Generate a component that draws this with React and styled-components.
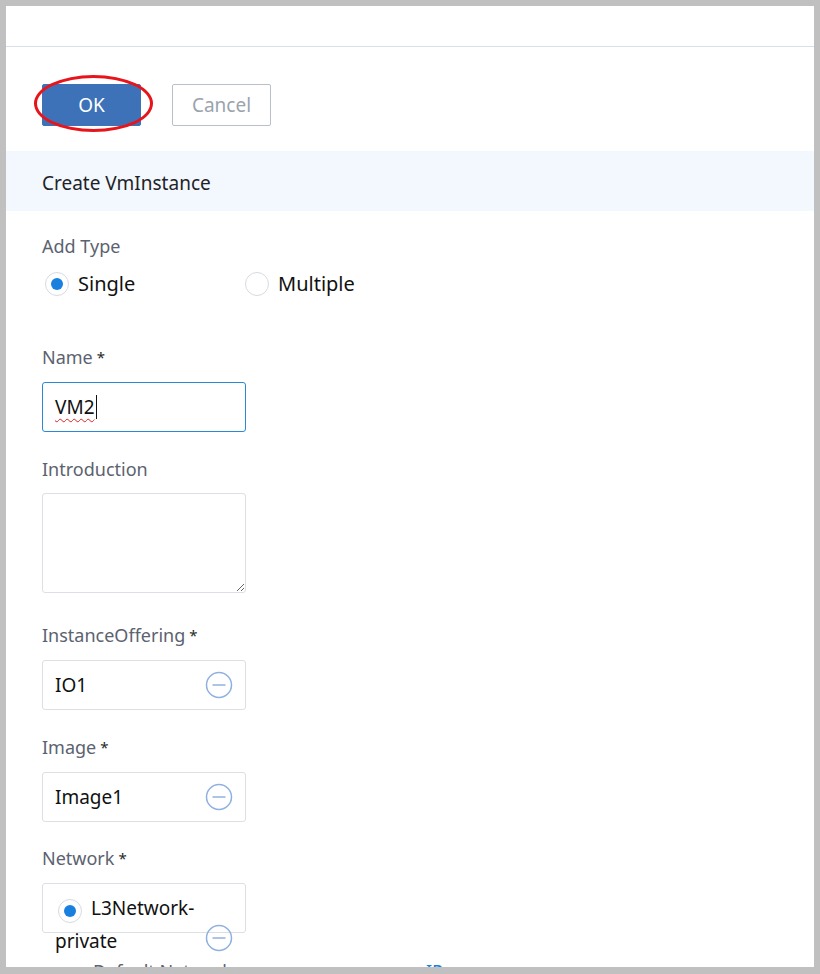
import React from 'react'
import styled, { createGlobalStyle } from 'styled-components'

const GlobalStyle = createGlobalStyle`
  html, body {
    margin: 0;
    padding: 0;
    background: #c0c0c0;
  }
  body {
    font-family: 'Noto Sans', 'Open Sans', sans-serif;
  }
`

const Panel = styled.div`
  margin: 6px 6px 0 6px;
  height: 961px;
  background: #fff;
  overflow: hidden;
`

const TopBar = styled.div`
  height: 40px;
  border-bottom: 1px solid #d9dfe6;
`

const Toolbar = styled.div`
  display: flex;
  gap: 31px;
  padding: 37px 36px 0 36px;
`

const ButtonWrap = styled.div`
  position: relative;
`

const Button = styled.button`
  width: 99px;
  height: 42px;
  box-sizing: border-box;
  font-family: inherit;
  font-size: 19px;
  border-radius: 2px;
  cursor: pointer;
  border: 1px solid ${p => (p.$primary ? '#3d72b8' : '#b9c0c9')};
  background: ${p => (p.$primary ? '#3d72b8' : '#fff')};
  color: ${p => (p.$primary ? '#fff' : '#9aa3ae')};
`

const Highlight = styled.div`
  position: absolute;
  left: -8px;
  top: -9px;
  width: 119px;
  height: 57px;
  box-sizing: border-box;
  border: 3.5px solid #e8141b;
  border-radius: 50%;
  pointer-events: none;
`

const SectionHeader = styled.div`
  margin-top: 25px;
  height: 60px;
  box-sizing: border-box;
  padding: 3px 36px 0 36px;
  display: flex;
  align-items: center;
  background: #f2f8fd;
  font-size: 19px;
  color: #1f2329;
`

const Form = styled.div`
  padding: 23px 36px 0 36px;
`

const Field = styled.div`
  margin-bottom: ${p => p.$gap || 24}px;
`

const Label = styled.div`
  font-size: 18px;
  line-height: 24px;
  color: #5b6270;
  margin-bottom: 13px;
`

const Star = styled.span`
  margin-left: 4px;
  font-size: 15px;
  color: #1f2a1f;
  vertical-align: top;
`

const RadioRow = styled.div`
  display: flex;
  align-items: center;
  margin-top: -1px;
`

const RadioOption = styled.label`
  display: flex;
  align-items: center;
  width: ${p => p.$width || 'auto'};
  font-size: 20px;
  color: #111;
`

const RadioCircle = styled.span`
  width: 24px;
  height: 24px;
  box-sizing: border-box;
  border-radius: 50%;
  border: 1px solid #d6dbe1;
  margin: 0 9px 0 3px;
  display: flex;
  align-items: center;
  justify-content: center;
  flex-shrink: 0;
  &::after {
    content: '';
    width: 12px;
    height: 12px;
    border-radius: 50%;
    background: #1a80e0;
    display: ${p => (p.$checked ? 'block' : 'none')};
  }
`

const TextBox = styled.div`
  width: 204px;
  height: 50px;
  box-sizing: border-box;
  border: 1px solid ${p => (p.$focused ? '#2a88d8' : '#dcdfe3')};
  border-radius: 3px;
  padding: 0 12px;
  display: flex;
  align-items: center;
  font-size: 19px;
  color: #111;
`

const Misspelled = styled.span`
  text-decoration: underline wavy #e02020;
  text-decoration-thickness: 1px;
  text-underline-offset: 4px;
`

const Caret = styled.span`
  display: inline-block;
  width: 1px;
  height: 24px;
  background: #111;
  margin-left: 1px;
`

const TextArea = styled.textarea`
  width: 204px;
  height: 100px;
  box-sizing: border-box;
  border: 1px solid #dcdfe3;
  border-radius: 3px;
  font-family: inherit;
  font-size: 18px;
  outline: none;
  margin: -1px 0 0 0;
  vertical-align: top;
`

const SelectBox = styled.div`
  width: 204px;
  height: 50px;
  box-sizing: border-box;
  border: 1px solid #dcdfe3;
  border-radius: 3px;
  padding: 0 12px;
  display: flex;
  align-items: center;
  justify-content: space-between;
  font-size: 19px;
  color: #111;
`

const NetworkBox = styled(SelectBox)`
  align-items: flex-start;
  padding-top: 8px;
`

const NetworkItem = styled.div`
  width: 145px;
  font-size: 19px;
  line-height: 33px;
  color: #111;
`

const InlineRadio = styled(RadioCircle)`
  display: inline-flex;
  vertical-align: -2px;
  margin: 0 9px 0 3px;
`

const NetworkIcon = styled.span`
  margin-top: 32px;
  display: flex;
`

const MoreRow = styled.div`
  display: flex;
  margin-top: 26px;
  font-size: 18px;
  color: #5b6270;
`

const MoreCell = styled.span`
  width: ${p => p.$width}px;
  color: ${p => p.$color || 'inherit'};
`

function MinusCircle() {
  return (
    <svg width="28" height="28" viewBox="0 0 28 28" fill="none">
      <circle cx="14" cy="14" r="12.5" stroke="#8fb1e0" strokeWidth="1.5" />
      <line x1="7.5" y1="14" x2="20.5" y2="14" stroke="#8fb1e0" strokeWidth="1.5" />
    </svg>
  )
}

export default function App() {
  return (
    <>
      <GlobalStyle />
      <Panel>
        <TopBar />
        <Toolbar>
          <ButtonWrap>
            <Button $primary>OK</Button>
            <Highlight />
          </ButtonWrap>
          <Button>Cancel</Button>
        </Toolbar>
        <SectionHeader>Create VmInstance</SectionHeader>
        <Form>
          <Field $gap={48}>
            <Label>Add Type</Label>
            <RadioRow>
              <RadioOption $width="200px">
                <RadioCircle $checked />
                Single
              </RadioOption>
              <RadioOption>
                <RadioCircle />
                Multiple
              </RadioOption>
            </RadioRow>
          </Field>
          <Field $gap={25}>
            <Label>
              Name<Star>*</Star>
            </Label>
            <TextBox $focused>
              <Misspelled>VM2</Misspelled>
              <Caret />
            </TextBox>
          </Field>
          <Field $gap={30}>
            <Label>Introduction</Label>
            <TextArea />
          </Field>
          <Field $gap={25}>
            <Label>
              InstanceOffering<Star>*</Star>
            </Label>
            <SelectBox>
              IO1
              <MinusCircle />
            </SelectBox>
          </Field>
          <Field>
            <Label>
              Image<Star>*</Star>
            </Label>
            <SelectBox>
              Image1
              <MinusCircle />
            </SelectBox>
          </Field>
          <Field>
            <Label>
              Network<Star>*</Star>
            </Label>
            <NetworkBox>
              <NetworkItem>
                <InlineRadio $checked />
                L3Network-private
              </NetworkItem>
              <NetworkIcon>
                <MinusCircle />
              </NetworkIcon>
            </NetworkBox>
            <MoreRow>
              <MoreCell $width={51} />
              <MoreCell $width={333}>Default Network</MoreCell>
              <MoreCell $width={80} $color="#1a80e0">IP</MoreCell>
            </MoreRow>
          </Field>
        </Form>
      </Panel>
    </>
  )
}
